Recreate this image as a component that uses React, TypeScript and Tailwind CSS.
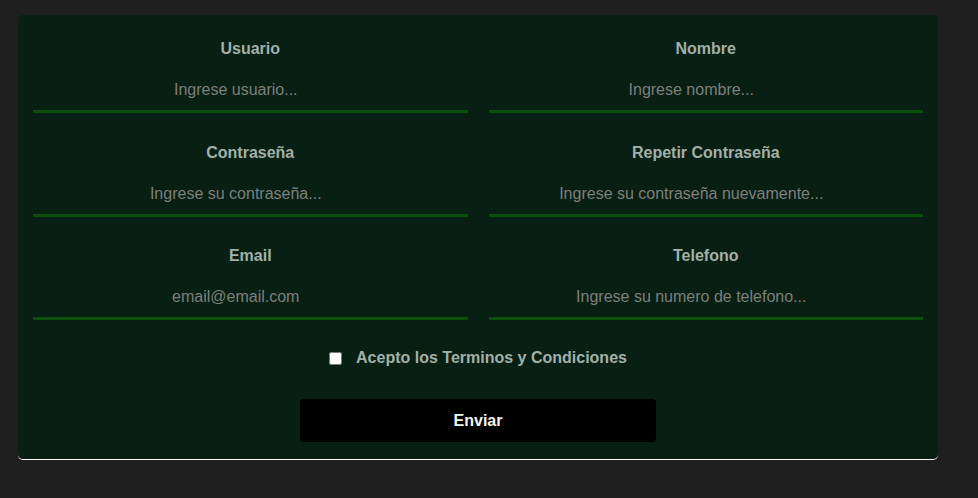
import React from "react";

const fields = [
  ["Usuario", "Ingrese usuario...", "text"],
  ["Nombre", "Ingrese nombre...", "text"],
  ["Contraseña", "Ingrese su contraseña...", "password"],
  ["Repetir Contraseña", "Ingrese su contraseña nuevamente...", "password"],
  ["Email", "email@email.com", "email"],
  ["Telefono", "Ingrese su numero de telefono...", "tel"],
];

export default function App() {
  return (
    <div
      className="min-h-[498px] w-full bg-[#1f1f1f] pt-[15px] pl-[18px]"
      style={{ fontFamily: '"Liberation Sans", Arial, sans-serif' }}
    >
      <form className="w-[920px] rounded-[5px] border-b border-white bg-[#072013] px-[15px] pt-[25px] pb-[17px]">
        <div className="grid grid-cols-2 gap-x-[21px] gap-y-[30.5px]">
          {fields.map(([label, ph, type]) => (
            <div key={label} className="flex flex-col items-center">
              <label className="h-[18px] text-[16px] leading-[18px] font-bold text-[#a3b0a9]">
                {label}
              </label>
              <input
                type={type}
                placeholder={ph}
                className="mt-[12px] h-[43px] w-full border-b-[3px] border-[#0b4f0d] bg-transparent pr-[29px] text-center text-[16px] text-[#8a8a8a] outline-none placeholder:text-[#7d7f7d]"
              />
            </div>
          ))}
        </div>
        <div className="mt-[29px] flex items-center justify-center">
          <input type="checkbox" className="m-0 h-[13px] w-[13px]" />
          <span className="ml-[14px] text-[16px] leading-[18px] font-bold text-[#a3b0a9]">
            Acepto los Terminos y Condiciones
          </span>
        </div>
        <div className="mt-[32px] flex justify-center">
          <button
            type="button"
            className="h-[43px] w-[356px] rounded-[3px] bg-black text-[16px] font-bold text-[#f4f4ee]"
          >
            Enviar
          </button>
        </div>
      </form>
    </div>
  );
}
